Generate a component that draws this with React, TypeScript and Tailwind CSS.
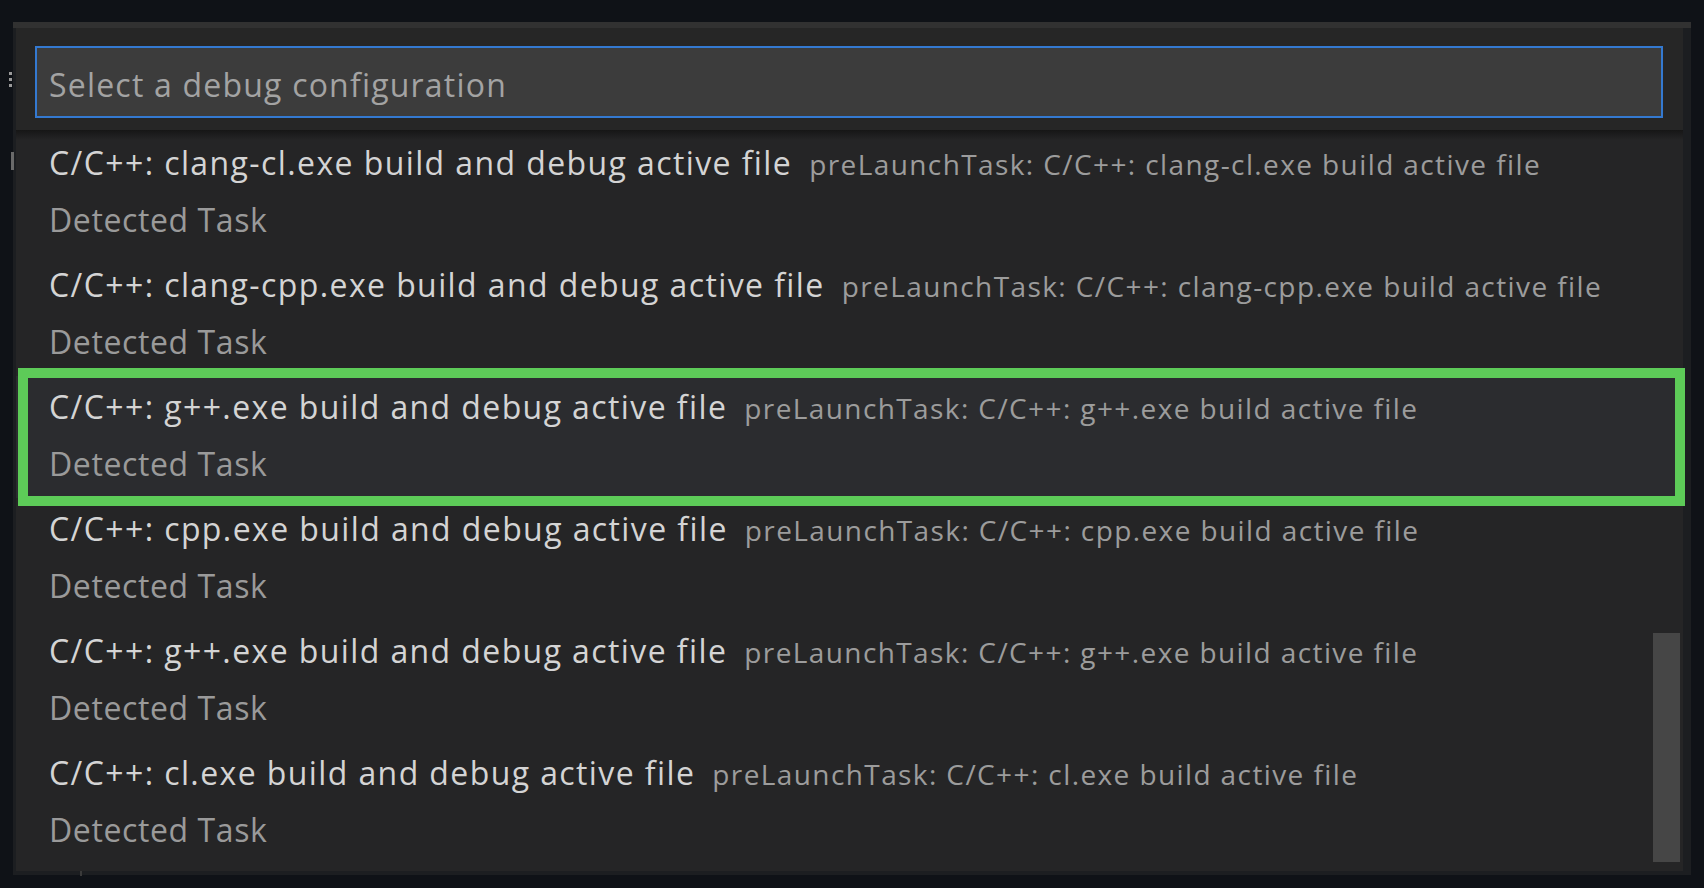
const items = [
  { label: 'C/C++: clang-cl.exe build and debug active file', task: 'preLaunchTask: C/C++: clang-cl.exe build active file' },
  { label: 'C/C++: clang-cpp.exe build and debug active file', task: 'preLaunchTask: C/C++: clang-cpp.exe build active file' },
  { label: 'C/C++: g++.exe build and debug active file', task: 'preLaunchTask: C/C++: g++.exe build active file', active: true },
  { label: 'C/C++: cpp.exe build and debug active file', task: 'preLaunchTask: C/C++: cpp.exe build active file' },
  { label: 'C/C++: g++.exe build and debug active file', task: 'preLaunchTask: C/C++: g++.exe build active file' },
  { label: 'C/C++: cl.exe build and debug active file', task: 'preLaunchTask: C/C++: cl.exe build active file' },
];

const ConfigRow = ({ label, task, active }: { label: string; task: string; active?: boolean }) => {
  return (
    <div className={`relative h-[122px] pt-[3px] pl-[33px] ${active ? 'bg-[#2b2c2f]' : ''}`}>
      <div className="flex items-baseline leading-[55px] whitespace-nowrap">
        <span className="text-[32px] tracking-[1.4px] text-[#d4d4d4]">{label}</span>
        <span className="ml-[17px] text-[28px] tracking-[1.4px] text-[#9c9c9c]">{task}</span>
      </div>
      <div className="leading-[55px] text-[32px] tracking-[0.6px] text-[#9a9a9a]">Detected Task</div>
      {/* green annotation box */}
      {active && (
        <div className="absolute -top-[8px] -bottom-[8px] left-[2px] -right-[2px] border-[10px] border-[#5dcb58]" />
      )}
    </div>
  );
};

export default function App() {
  return (
    <div
      className="relative w-[1704px] h-[888px] overflow-hidden bg-[#0f1217] pt-[22px] pl-[13px]"
      style={{ fontFamily: '"Open Sans", "Noto Sans", sans-serif' }}
    >
      {/* editor bits peeking out behind the widget */}
      <div className="absolute left-[9px] top-[72px] flex flex-col gap-[3px]">
        <span className="w-[3px] h-[3px] bg-[#9a9a9a]" />
        <span className="w-[3px] h-[3px] bg-[#9a9a9a]" />
        <span className="w-[3px] h-[3px] bg-[#9a9a9a]" />
      </div>
      <div className="absolute left-[11px] top-[152px] w-[3px] h-[18px] bg-[#6a6a6a]" />
      <div className="absolute left-[80px] top-[870px] w-[2px] h-[6px] bg-[#3a3a3a]" />

      <div className="w-[1678px] h-[853px] flex flex-col bg-[#1c1e21] border-t-[6px] border-t-[#313131] pl-[3px] pr-[8px] pb-[4px]">
        {/* input */}
        <div className="h-[104px] shrink-0 bg-[#262626] pt-[18px] pl-[19px]">
          <div className="w-[1628px] h-[72px] bg-[#3c3c3c] border-2 border-[#3479d0] flex items-center pl-[12px] pt-[6px]">
            <span className="text-[32px] tracking-[1.2px] text-[#a3a3a3]">Select a debug configuration</span>
          </div>
        </div>

        {/* list */}
        <div className="relative flex-1 bg-[#252526]">
          <div className="absolute top-[-2px] left-0 right-0 h-[10px] bg-gradient-to-b from-[#161616] to-transparent" />
          {items.map((item, i) => (
            <ConfigRow key={i} {...item} />
          ))}
          <div className="absolute left-[1637px] top-[501px] w-[27px] h-[229px] bg-[#464646]" />
        </div>
      </div>
    </div>
  );
}
